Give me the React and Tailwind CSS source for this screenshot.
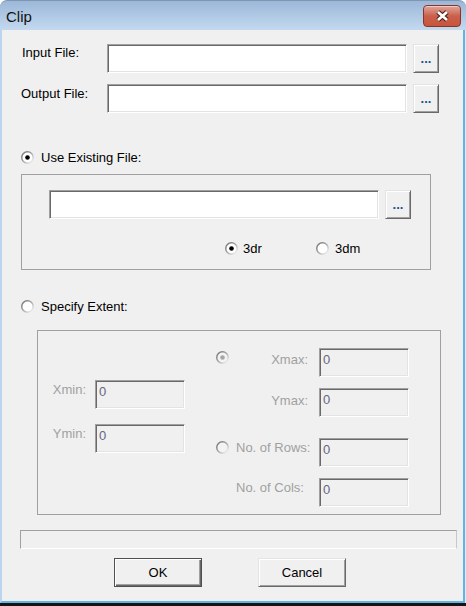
import React from "react";

const Radio = ({ checked, disabled }) => {
  const fill = disabled ? "#f3f3f3" : "#ffffff";
  const dot = disabled ? "#a6a6a6" : "#000000";
  return (
    <svg width="13" height="13" viewBox="0 0 13 13" className="shrink-0">
      <defs>
        <linearGradient id="radioRing" x1="0" y1="0" x2="1" y2="1">
          <stop offset="0" stopColor="#6c6c6c" />
          <stop offset="0.5" stopColor="#a8a8a8" />
          <stop offset="1" stopColor="#ffffff" />
        </linearGradient>
      </defs>
      <circle cx="6.5" cy="6.5" r="5.75" fill={fill} stroke="url(#radioRing)" strokeWidth="1.5" />
      {checked && <circle cx="6.5" cy="6.5" r="2.3" fill={dot} />}
    </svg>
  );
};

const TextBox = ({ className = "", disabled, value }) => {
  return (
    <div
      className={`h-[29px] border border-t-[#a0a0a0] border-l-[#a0a0a0] border-b-white border-r-white pl-[3px] pt-[3px] shadow-[inset_1px_1px_0_#696969,inset_-1px_-1px_0_#e3e3e3] ${
        disabled ? "bg-[#f0f0f0] text-[#66667f]" : "bg-white"
      } ${className}`}
    >
      {value}
    </div>
  );
};

const Browse = ({ className = "" }) => {
  return (
    <button
      type="button"
      className={`w-[26px] h-[29px] flex items-center justify-center bg-[#f0f0f0] border border-t-[#e3e3e3] border-l-[#e3e3e3] border-b-[#696969] border-r-[#696969] shadow-[inset_1px_1px_0_#ffffff,inset_-1px_-1px_0_#a0a0a0] text-[#1b4f91] font-bold ${className}`}
    >
      ...
    </button>
  );
};

const DisabledRow = ({ radio, checked, label, right, pt, className = "" }) => {
  return (
    <div className={`flex items-start h-[29px] ${className}`}>
      <div className="w-[20px]">
        {radio && (
          <div className="mt-[3px]">
            <Radio disabled checked={checked} />
          </div>
        )}
      </div>
      <div className={`w-[72px] whitespace-nowrap text-[#a0a0a0] ${right ? "text-right" : ""} ${pt}`}>
        {label}
      </div>
      <TextBox disabled value="0" className="ml-[11px] w-[90px]" />
    </div>
  );
};

export default function App() {
  return (
    <div className="w-[466px] h-[606px] bg-white flex flex-col font-['Liberation_Sans',Arial,sans-serif] text-[13px] leading-[15px] text-black">
      <div className="h-[603px] flex flex-col">
        {/* title bar */}
        <div className="h-[30px] shrink-0 flex items-start justify-between rounded-t-[7px] border-t border-[#7f96b1] bg-linear-to-b from-[#9cb8d9] to-[#c3d9ef]">
          <div className="mt-[7px] ml-[6px] text-[15px] leading-[18px] text-[#111]">Clip</div>
          <button
            type="button"
            className="mt-[4px] mr-[5px] w-[38px] h-[22px] flex items-center justify-center rounded-[4px] border border-[#8a3428] bg-linear-to-b from-[#e0a699] via-[#c9604c] to-[#c8553b] shadow-[inset_0_1px_0_rgba(255,255,255,0.45)]"
          >
            <svg width="17" height="14" viewBox="0 0 17 14">
              <path d="M4 3 L13 11 M13 3 L4 11" stroke="#4a1c14" strokeWidth="5" />
              <path d="M4 3 L13 11 M13 3 L4 11" stroke="#ffffff" strokeWidth="2.8" />
            </svg>
          </button>
        </div>

        <div className="flex-1 flex">
          <div className="flex-1 flex flex-col bg-[#f0f0f0] border-l-2 border-l-[#bcd4ec] border-r-2 border-r-[#63b4e4] border-b-2 border-b-[#63b4e4]">
            {/* input file */}
            <div className="mt-[14px] pl-[20px] flex items-start">
              <div className="w-[85px] pt-[1px]">Input File:</div>
              <TextBox className="w-[300px]" />
              <Browse className="ml-[6px]" />
            </div>
            {/* output file */}
            <div className="mt-[11px] pl-[19px] flex items-start">
              <div className="w-[86px] pt-[2px]">Output File:</div>
              <TextBox className="w-[300px]" />
              <Browse className="ml-[6px]" />
            </div>

            {/* use existing file */}
            <div className="mt-[38px] ml-[19px] h-[13px] flex items-center">
              <Radio checked />
              <span className="ml-[7px]">Use Existing File:</span>
            </div>
            <div className="mt-[10px] ml-[19px] w-[410px] h-[96px] border border-[#a0a0a0] flex flex-col">
              <div className="mt-[15px] ml-[27px] flex items-start">
                <TextBox className="w-[330px]" />
                <Browse className="ml-[6px]" />
              </div>
              <div className="mt-[23px] ml-[203px] h-[13px] flex items-center">
                <div className="w-[91px] flex items-center">
                  <Radio checked />
                  <span className="ml-[5px]">3dr</span>
                </div>
                <Radio />
                <span className="ml-[6px]">3dm</span>
              </div>
            </div>

            {/* specify extent */}
            <div className="mt-[30px] ml-[19px] h-[13px] flex items-center">
              <Radio />
              <span className="ml-[7px]">Specify Extent:</span>
            </div>
            <div className="mt-[17px] ml-[35px] w-[404px] h-[185px] border border-[#a0a0a0] flex">
              <div className="pl-[8px] pt-[49px] flex flex-col">
                <div className="flex items-start">
                  <div className="w-[40px] flex justify-end pt-[2px] whitespace-nowrap text-[#a0a0a0]">Xmin:</div>
                  <TextBox disabled value="0" className="ml-[9px] w-[90px]" />
                </div>
                <div className="mt-[15px] flex items-start">
                  <div className="w-[40px] flex justify-end pt-[2px] whitespace-nowrap text-[#a0a0a0]">Ymin:</div>
                  <TextBox disabled value="0" className="ml-[9px] w-[90px]" />
                </div>
              </div>
              <div className="ml-[31px] pt-[17px] flex flex-col">
                <DisabledRow radio checked label="Xmax:" right pt="pt-[4px]" />
                <DisabledRow label="Ymax:" right pt="pt-[5px]" className="mt-[11px]" />
                <DisabledRow radio label="No. of Rows:" pt="pt-[2px]" className="mt-[21px]" />
                <DisabledRow label="No. of Cols:" pt="pt-[2px]" className="mt-[11px]" />
              </div>
            </div>

            {/* status strip */}
            <div className="mt-[15px] ml-[18px] w-[437px] h-[19px] border border-t-[#a0a0a0] border-l-[#a0a0a0] border-b-white border-r-[#c8c8c8]" />

            {/* buttons */}
            <div className="mt-[9px] ml-[112px] flex items-start">
              <button
                type="button"
                className="w-[88px] h-[29px] bg-[#f0f0f0] border border-[#4f4f4f] shadow-[inset_1px_1px_0_#ffffff,inset_-1px_-1px_0_#696969,inset_-2px_-2px_0_#a0a0a0]"
              >
                OK
              </button>
              <button
                type="button"
                className="ml-[56px] w-[88px] h-[29px] bg-[#f0f0f0] border border-t-[#e3e3e3] border-l-[#e3e3e3] border-b-[#696969] border-r-[#696969] shadow-[inset_1px_1px_0_#ffffff,inset_-1px_-1px_0_#a0a0a0]"
              >
                Cancel
              </button>
            </div>
          </div>
          <div className="w-[1px] bg-[#dce9f5]" />
        </div>
      </div>
      <div className="h-[3px] bg-[#151515]" />
    </div>
  );
}
